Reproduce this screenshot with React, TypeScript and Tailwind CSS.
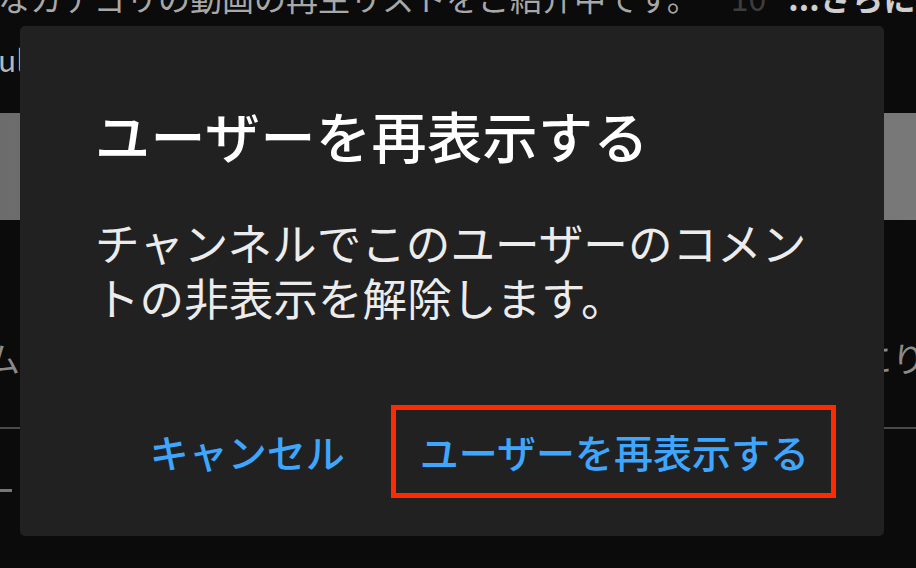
export default function App() {
  const font = { fontFamily: '"Noto Sans CJK JP", "Noto Sans", sans-serif' };

  return (
    <div
      className="relative w-[916px] h-[568px] overflow-hidden bg-[#0b0b0b] text-white"
      style={font}
    >
      {/* page behind the dialog */}
      <div className="flex flex-col">
        <div className="-mt-[20px] h-[34px] flex items-end whitespace-nowrap text-[32px] leading-[34px]">
          <span className="-ml-[2px] text-[#a8a8a8]">なカテゴリの動画の再生リストをご紹介中です。</span>
          <span className="ml-[32px] text-[#3d3d3d]">10</span>
          <span className="ml-[22px] font-bold text-[#cfcfcf]">...さらに</span>
        </div>
        <div className="mt-[30px] h-[30px] text-[30px] leading-[30px] text-[#b8b8b8] whitespace-nowrap -ml-[2px]">ul</div>
        <div className="mt-[39px] h-[107px] bg-gradient-to-r from-[#6c6c6c] to-[#787878]" />
        <div className="mt-[118px] h-[40px] flex justify-between items-center text-[34px] leading-[40px] text-[#8a8a8a] whitespace-nowrap">
          <span className="-ml-[14px]">ム</span>
          <span className="-mr-[10px]">にり</span>
        </div>
        <div className="mt-[49px] h-[2px] bg-[#4a4a4a]" />
        <div className="mt-[60px] w-[12px] h-[3px] bg-[#777777]" />
      </div>

      {/* dialog */}
      <div className="absolute left-[20px] top-[26px] w-[864px] h-[510px] rounded-[5px] bg-[#212121] flex flex-col pl-[75px] pr-[48px] pt-[76px] pb-[38px]">
        <h2 className="text-[55px] leading-[64px] font-medium text-white tracking-[0.5px]">
          ユーザーを再表示する
        </h2>
        <p className="mt-[48px] pr-[10px] text-[44.6px] leading-[55px] text-[#ececec] font-normal">
          チャンネルでこのユーザーのコメントの非表示を解除します。
        </p>
        <div className="mt-auto flex justify-end items-center gap-[46px]">
          <button className="text-[39px] leading-[55px] font-medium text-[#3ea6ff]">キャンセル</button>
          <div className="border-[5px] border-[#ff2a00] pl-[24px] pr-[22px] py-[14px]">
            <button className="text-[39px] leading-[55px] font-medium text-[#3ea6ff] whitespace-nowrap">
              ユーザーを再表示する
            </button>
          </div>
        </div>
      </div>
    </div>
  );
}
